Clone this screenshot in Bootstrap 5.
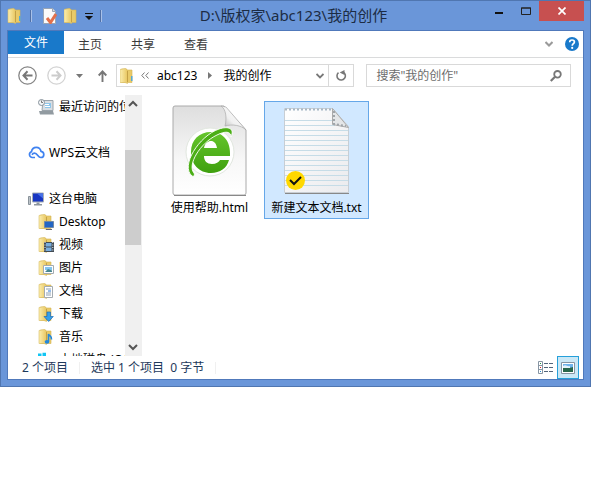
<!DOCTYPE html>
<html lang="zh-CN">
<head>
<meta charset="utf-8">
<meta name="viewport" content="width=device-width, initial-scale=1">
<title>D:\版权家\abc123\我的创作</title>
<link href="https://cdn.jsdelivr.net/npm/bootstrap@5.3.0/dist/css/bootstrap.min.css" rel="stylesheet">
<style>
body{font-family:"Noto Sans","Noto Sans CJK SC",sans-serif;font-size:12px;line-height:16px;color:#000;background:#fff}
svg{display:block;flex:none}
button{font:inherit;color:inherit;border:0;background:none;padding:0}
a{color:inherit;text-decoration:none}
.explorer{background:#6a96d9;border:1px solid #5076b0;margin-right:1px;padding:0 6px 6px}
.titlebar{height:29px}
.quick{gap:7px}
.quick .bar{width:2px;height:12px;background:linear-gradient(90deg,#4f70a8 50%,#a9c1e8 50%)}
.caption{font-size:15px;line-height:20px;color:#1c2c44;padding-top:4px;margin:0;font-weight:400}
.winctl button{height:20px;display:flex;justify-content:center;align-items:center}
.winctl .wc-s{width:27px}
.winctl .wc-x{width:45px;background:#c75050}
.client{background:#fff;border:1px solid #5079bb}
.ribbon{height:27px;border-bottom:1px solid #dadbdc;color:#3b3b3b}
.ribbon a{height:23px;line-height:24px;width:53px;text-align:center;padding:2px 1px 0 0}
.ribbon a.file{width:56px;background:#1979ca;color:#fff;padding:0}
.addr{height:37px;padding:6px 12px 0 10px}
.addr .go{height:23px;gap:10px;padding-right:9px}
.addr .go .up{padding-left:5px}
.addr .box{height:23px;border:1px solid #d9d9d9}
.addr .path{flex:6 1 0;min-width:0;padding-left:3px}
.addr .sep{margin:0 11px}
.addr .find{flex:5 1 0;min-width:0;margin-left:12px}
.addr .reload{width:25px;height:21px;border-left:1px solid #d9d9d9}
.find input{border:0;outline:0;background:none;padding:0 0 0 9px;min-width:0;flex:1;font:inherit}
.find input::placeholder{color:#6d6d6d;opacity:1}
.panes{height:261px}
.side{width:134px;border-right:1px solid #f0f0f0}
.tree{width:117px;overflow:hidden;white-space:nowrap}
.tree a{height:23px;gap:5px;padding-left:20px}
.tree a.top{gap:4px}
.tree a.sub{padding-left:30px}
.tree .space{height:23px}
.scroll{width:16px;background:#f0f0f0;padding:5px 0}
.scroll .thumb{height:95px;margin-top:43px;background:#cdcdcd}
.files{padding:6px 0 0 15px}
.tile{width:105px;height:118px;border:1px solid transparent;margin-right:2px}
.tile.sel{background:#d1e8ff;border-color:#66a7e8}
.status{height:23px;color:#1e395b;padding-left:14px}
.status .seg{padding-right:11px;margin-right:11px;border-right:1px solid #f0f0f0;line-height:12px}
.status .view{width:22px;height:23px;display:flex;align-items:center;justify-content:center}
.status .on{background:#cbe8f6;border:1px solid #26a0da}
</style>
</head>
<body>
<svg width="0" height="0" class="position-absolute" aria-hidden="true">
<defs>
<linearGradient id="gf" x1="0" x2="1"><stop offset="0" stop-color="#fbeeb0"/><stop offset="1" stop-color="#e8c660"/></linearGradient>
<linearGradient id="gp" x1="0" y1="0" x2="0" y2="1"><stop offset="0" stop-color="#dedede"/><stop offset=".6" stop-color="#f7f7f7"/><stop offset="1" stop-color="#fff"/></linearGradient>
<linearGradient id="gg" x1="0" y1="0" x2="0" y2="1"><stop offset="0" stop-color="#65c52c"/><stop offset="1" stop-color="#3fa00f"/></linearGradient>
<linearGradient id="gc" x1="0" y1="1" x2="1" y2="0"><stop offset="0" stop-color="#a5a5a5"/><stop offset=".4" stop-color="#f1f1f1"/><stop offset="1" stop-color="#fff"/></linearGradient>
<linearGradient id="gn" x1="0" y1="0" x2="1" y2="1"><stop offset="0" stop-color="#fff"/><stop offset="1" stop-color="#ebebee"/></linearGradient>
<symbol id="folder" viewBox="0 0 16 16"><path d="M2.500 1h5v13.500h-5zM8 2h5v12.500H8z" fill="#e9ca69" stroke="#d5b453" stroke-width=".6"/><path d="M1 1.500 6.500.5l2 1.500v13.500L6 14.500H1z" fill="url(#gf)" stroke="#d9bc62" stroke-width=".6"/><path d="M8.500 3v11" stroke="#b9943b" stroke-width=".7"/></symbol>
</defs>
</svg>
<div class="explorer">
<header class="titlebar d-flex">
<div class="quick d-flex align-items-center">
<svg width="16" height="16"><use href="#folder"/><path d="M12 8h1.500v5H12z" fill="#55a9d8"/></svg>
<span class="bar"></span>
<button class="ps-1" aria-label="属性"><svg width="14" height="16" viewBox="1 0 14 16"><path d="M1.500.5h9l3 3v12h-12z" fill="#fafafa" stroke="#98a4b5"/><path d="M10.500.5v3h3" fill="#ddd" stroke="#98a4b5"/><path d="m5 10 3.500 4.500L14 6" fill="none" stroke="#e2704c" stroke-width="3"/></svg></button>
<button aria-label="新建文件夹"><svg width="14" height="16" viewBox="1 0 14 16"><use href="#folder" width="16" height="16"/></svg></button>
<button aria-label="自定义快速访问工具栏"><svg width="8" height="8"><path d="M0 1.500h8" stroke="#111"/><path d="M0 4h8L4 8z" fill="#111"/></svg></button>
<span class="bar"></span>
</div>
<h1 class="caption flex-fill text-center text-truncate">D:\版权家\abc123\我的创作</h1>
<div class="winctl d-flex">
<button class="wc-s" aria-label="最小化"><svg width="8" height="8"><path d="M0 6h8" stroke="#111" stroke-width="2"/></svg></button>
<button class="wc-s" aria-label="最大化"><svg width="10" height="8"><path d="M.5 1h9v6.500h-9zM0 1h10" fill="none" stroke="#222"/></svg></button>
<button class="wc-x" aria-label="关闭"><svg width="8" height="8"><path d="m.5.5 7 7m0-7-7 7" stroke="#fff" stroke-width="1.700"/></svg></button>
</div>
</header>
<main class="client">
<nav class="ribbon d-flex" aria-label="功能区">
<a class="file" href="#">文件</a><a href="#">主页</a><a href="#">共享</a><a href="#">查看</a>
<div class="ms-auto d-flex align-items-center gap-2 pe-1">
<button class="px-1" aria-label="展开功能区"><svg width="8" height="6"><path d="m.5 1 3.500 3.500L7.500 1" fill="none" stroke="#9a9a9a" stroke-width="2"/></svg></button>
<button aria-label="帮助"><svg width="14" height="14"><circle cx="7" cy="7" r="7" fill="#1979ca"/><path d="M4.700 5.200C4.700 3.600 5.700 3 7 3c1.400 0 2.400.8 2.400 2C9.400 6.700 7.200 6.700 7.200 8.800" fill="none" stroke="#fff" stroke-width="1.700"/><circle cx="7.200" cy="10.900" r="1.100" fill="#fff"/></svg></button>
</div>
</nav>
<div class="addr d-flex">
<div class="go d-flex align-items-center">
<button aria-label="后退"><svg width="19" height="19"><circle cx="9.500" cy="9.500" r="8.700" fill="none" stroke="#858585" stroke-width="1.300"/><path d="M14.500 9.500H5.500m4-4.200-4 4.200 4 4.200" fill="none" stroke="#777" stroke-width="2"/></svg></button>
<button aria-label="前进"><svg width="19" height="19"><circle cx="9.500" cy="9.500" r="8.700" fill="none" stroke="#d3d3d3" stroke-width="1.300"/><path d="M4.500 9.500h9m-4-4.200 4 4.200-4 4.200" fill="none" stroke="#ccc" stroke-width="2"/></svg></button>
<button aria-label="最近位置"><svg width="7" height="4"><path d="M0 0h7L3.500 4z" fill="#777"/></svg></button>
<button class="up" aria-label="上移"><svg width="9" height="12"><path d="M4.500 12V1.500M.7 5.500l3.800-4 3.800 4" fill="none" stroke="#777" stroke-width="1.900"/></svg></button>
</div>
<div class="box path d-flex align-items-center">
<svg width="13" height="16" viewBox="1 0 13 16"><use href="#folder" width="16" height="16"/><path d="M12 8h1.500v5H12z" fill="#55a9d8"/></svg>
<button class="px-2" aria-label="上级位置"><svg width="8" height="7"><path d="M3.500.5.8 3.500l2.700 3M7.500.5l-2.700 3 2.700 3" fill="none" stroke="#777"/></svg></button>
<a href="#">abc123</a>
<svg class="sep" width="4" height="7"><path d="M0 0l4 3.500L0 7z" fill="#777"/></svg>
<a href="#">我的创作</a>
<button class="ms-auto px-1" aria-label="历史地址"><svg width="8" height="6"><path d="m.5 1 3.500 3.500L7.500 1" fill="none" stroke="#777" stroke-width="1.800"/></svg></button>
<button class="reload d-flex align-items-center justify-content-center" aria-label="刷新"><svg width="12" height="12"><path d="M8.300 2.200A4.200 4.200 0 1 1 3.500 2.600" fill="none" stroke="#777" stroke-width="1.600"/><path d="M4.700 2.600 9.500 0v5z" fill="#777"/></svg></button>
</div>
<div class="box find d-flex align-items-center pe-2">
<input type="search" aria-label="搜索" placeholder='搜索"我的创作"'>
<svg width="12" height="12"><circle cx="7.500" cy="4.300" r="3.300" fill="none" stroke="#777" stroke-width="1.800"/><path d="M5 6.800.8 11" stroke="#777" stroke-width="2.200"/></svg>
</div>
</div>
<div class="panes d-flex">
<aside class="side d-flex">
<nav class="tree" aria-label="导航窗格">
<a href="#" class="sub d-flex align-items-center"><svg width="16" height="16"><path d="M5 1.500h10v10H4z" fill="#d9dee3" stroke="#9aa3aa"/><path d="M7 4h6v5H7z" fill="#8fc6ea"/><path d="M7 5.500h4m-4 2h5" stroke="#fff"/><path d="M1 12h14l1 3.500H2z" fill="#929ba1"/><circle cx="3.500" cy="3.500" r="3" fill="#f3f5f7" stroke="#84909a"/><path d="M3.500 1.500v2H5" fill="none" stroke="#555" stroke-width=".8"/></svg>最近访问的位置</a>
<div class="space"></div>
<a href="#" class="top d-flex align-items-center"><svg width="17" height="16"><path d="M7 12.500H4A3 3 0 0 1 3.500 6.700C4 3.800 6 2.300 8.300 2.300c2.500 0 4.200 1.700 4.700 4 1.700.3 2.800 1.500 2.800 3.100 0 1.800-1.300 3.100-3 3.100-3 0-3-4.300-6.300-4.300-1.200 0-2 .7-2.500 1.500" fill="none" stroke="#3f82f0" stroke-width="1.700"/></svg>WPS云文档</a>
<div class="space"></div>
<a href="#" class="top d-flex align-items-center"><svg width="17" height="16"><path d="M.5 5.500h2v8h-2z" fill="#bdc4ca" stroke="#89929a"/><path d="M4.500 2h11v9h-11z" fill="#1836c2" stroke="#a7aeb5"/><path d="M9 2.500h6v5z" fill="#4771e8"/><path d="M8.500 11.500h3V13H14v1.500H6V13h2.500z" fill="#8d969e"/></svg>这台电脑</a>
<a href="#" class="sub d-flex align-items-center"><svg width="16" height="16"><use href="#folder"/><path d="M6.500 7.500h9v6h-9z" fill="#2366c4" stroke="#7389a3"/><path d="M8 15.500h6" stroke="#667"/></svg>Desktop</a>
<a href="#" class="sub d-flex align-items-center"><svg width="16" height="16"><use href="#folder"/><path d="M6 5h10v10H6z" fill="#414b54"/><path d="M8 6h5.500v3.500H8zm0 4.500h5.500V14H8z" fill="#78aedf"/><path d="M14.800 5v10M7 5v10" stroke="#eee" stroke-dasharray="1 1.500"/></svg>视频</a>
<a href="#" class="sub d-flex align-items-center"><svg width="16" height="16"><use href="#folder"/><path d="M5.500 5.500h10v8h-10z" fill="#fff" stroke="#a4abb0"/><path d="M7 7h7v3H7z" fill="#83c5ef"/><path d="m7 12 3-3 4 1.500V12z" fill="#478792"/></svg>图片</a>
<a href="#" class="sub d-flex align-items-center"><svg width="16" height="16"><use href="#folder"/><path d="M6.500 3.500h8v11h-8z" fill="#fff" stroke="#a4abb0"/><path d="M8 6h5m-5 4h5m-5 2h5" stroke="#8ea1b4"/><path d="M10 8h3" stroke="#2d7ad6"/></svg>文档</a>
<a href="#" class="sub d-flex align-items-center"><svg width="16" height="16"><use href="#folder"/><path d="M9 6h3.500v4.500h2.800L10.700 15.500 6 10.500h3z" fill="#36a0ea" stroke="#1c6db8" stroke-width=".7"/></svg>下载</a>
<a href="#" class="sub d-flex align-items-center"><svg width="16" height="16"><use href="#folder"/><path d="M10.500 12.500V5c1 2 3.500 2.200 3 5.500" fill="none" stroke="#2387dc" stroke-width="1.600"/><ellipse cx="9" cy="12.800" rx="2.300" ry="1.900" fill="#2387dc"/></svg>音乐</a>
<a href="#" class="sub d-flex align-items-center"><svg width="16" height="16"><path d="M0 1.500h3.500V5H0zm4.500-.7H8V5H4.500z" fill="#10c5f4"/><path d="M0 7h15v5H0z" fill="#aab2ba"/></svg>本地磁盘 (C:)</a>
</nav>
<div class="scroll d-flex flex-column align-items-center" aria-hidden="true">
<svg width="10" height="7"><path d="m1 6 4-4 4 4" fill="none" stroke="#555" stroke-width="2"/></svg>
<div class="thumb w-100 mb-auto"></div>
<svg width="10" height="7"><path d="m1 1 4 4 4-4" fill="none" stroke="#555" stroke-width="2"/></svg>
</div>
</aside>
<section class="files d-flex flex-fill" aria-label="文件">
<a href="#" class="tile d-flex flex-column align-items-center">
<svg width="76" height="98" viewBox="0 0 76 98"><path d="M1 6q0-2 2-2h49l22 24v63q0 2-2 2H3q-2 0-2-2z" fill="url(#gp)" stroke="#aaa"/><path d="M2 93.500h72" stroke="#888"/><path d="M49 4c5 3 6 12 4 20 7-2 16-1 21 4L54 5z" fill="url(#gc)" stroke="#aaa" stroke-width=".7"/><circle cx="38" cy="50" r="24" fill="#fff" stroke="#e1e7df"/><path d="M58 54H32c0 5 3 8 8 8 4 0 7-2 8-4h9c-2 8-9 13-18 13-12 0-20-9-20-21s8-20 20-20 20 9 19 24zM32 46h13c-1-5-3-7-6-7s-6 2-7 7z" fill="url(#gg)"/><path d="M20 74C8 64 27 34 47 27c9-3 16-1 12 8 0-6-6-6-14-2C28 41 15 63 22 71c1 2 0 4-2 3z" fill="#4bae16" stroke="#fff" stroke-width=".9"/></svg>
<span>使用帮助.html</span></a>
<a href="#" class="tile sel d-flex flex-column align-items-center">
<svg width="68" height="98" viewBox="0 0 68 98"><path d="M1.500 6.500h48l16 18v66h-64z" fill="url(#gn)" stroke="#c8ced4"/><path d="M2 91.500h64" stroke="#888"/><path d="M2 18.500h49m-49 5h50m-50 5h63m-63 5h63m-63 5h63m-63 5h63m-63 5h63m-63 5h63m-63 5h63m-63 5h63m-63 5h63m-63 5h63m-63 5h63m-63 5h63" stroke="#c6dce7"/><path d="M2 7.500h46" stroke="#a6b7c6" stroke-width="2" stroke-dasharray="2 2"/><path d="M49.500 6.500v16l16 3z" fill="#e4e6e8" stroke="#aaa"/><path d="M51 9v13l12 2" fill="none" stroke="#a0a5aa" stroke-width="2" stroke-dasharray="2 2"/><circle cx="12.500" cy="78.500" r="9.500" fill="#ffd800"/><path d="m7 78 4 4 7-7" fill="none" stroke="#111" stroke-width="2"/></svg>
<span>新建文本文档.txt</span></a>
</section>
</div>
<footer class="status d-flex align-items-center">
<span class="seg">2 个项目</span><span class="seg">选中 1 个项目&nbsp; 0 字节</span>
<div class="ms-auto d-flex me-1">
<button class="view" aria-label="详细信息"><svg width="16" height="13"><path d="M.5.5h4v12h-4zm0 4h4m-4 4h4" fill="#fff" stroke="#8795a3"/><path d="M2 2h1v1H2z" fill="#27923b"/><path d="M2 6h1v1H2z" fill="#d22"/><path d="M2 10h1v1H2z" fill="#268bd2"/><path d="M6 2.500h4m1 0h4m-9 4h4m1 0h4m-9 4h4m1 0h4" stroke="#53657b"/></svg></button>
<button class="view on" aria-label="大图标"><svg width="14" height="12"><path d="M.5.5h13v11H.5z" fill="#fff" stroke="#8795a3"/><path d="M2 2h10v8H2z" fill="#6fb3ea"/><path d="M2 6c4-2 6 1 10-1v5H2z" fill="#28674b"/><path d="M2 4c3-2 4 1 7 0v2H2z" fill="#e5f3fb"/></svg></button>
</div>
</footer>
</main>
</div>
<script src="https://cdn.jsdelivr.net/npm/bootstrap@5.3.0/dist/js/bootstrap.bundle.min.js"></script>
</body>
</html>
